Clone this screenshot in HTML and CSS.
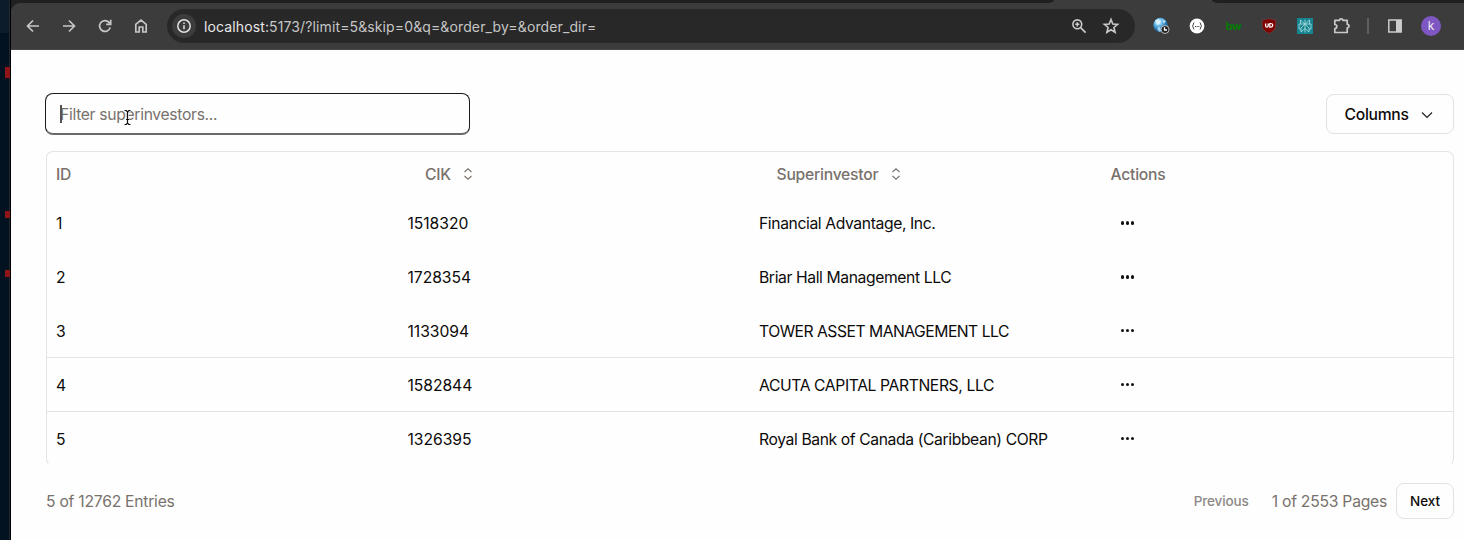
FILE: index.html
```
<!DOCTYPE html>
<html lang="en">
<head>
<meta charset="utf-8">
<title>Superinvestors</title>
<link rel="stylesheet" href="styles.css">
</head>
<body>
<div class="desktop">
  <div class="edge"><i class="mark m1"></i><i class="mark m2"></i><i class="mark m3"></i></div>
  <div class="window">
    <header class="chrome">
      <div class="tabs"><span class="tab-left"></span><span class="tab-gap"></span><span class="tab-right"></span></div>
      <div class="toolbar">
        <svg class="nav" viewBox="0 0 16 16"><path d="M14 8H3M8 2.500 2.500 8 8 13.500"/></svg>
        <svg class="nav" viewBox="0 0 16 16"><path d="M2 8h11M8 2.500 13.500 8 8 13.500"/></svg>
        <svg class="nav" viewBox="0 0 16 16"><path d="M13.200 9.400A5.400 5.400 0 1 1 12 4.400L13.500 6M13.700 1.800V6.400H9.200"/></svg>
        <svg class="nav" viewBox="0 0 16 16"><path d="M2.800 14V6.300L8 2.200l5.200 4.100V14H9.800V9H6.200v5z"/></svg>
        <div class="omnibox">
          <span class="info"><svg viewBox="0 0 16 16"><circle cx="8" cy="8" r="6.200"/><path d="M8 7.300v4M8 4.500v1.600"/></svg></span>
          <span class="url"><b>localhost:</b>5173/?limit=5&amp;skip=0&amp;q=&amp;order_by=&amp;order_dir=</span>
          <svg class="lens" viewBox="0 0 16 16"><circle cx="6.300" cy="6.300" r="4.400"/><path d="m9.600 9.600 5 5M6.300 4.200v4.200M4.200 6.300h4.200"/></svg>
          <svg class="star" viewBox="0 0 18 18"><path d="m9 2.500 1.800 4.500 4.800.4-3.700 3.100 1.200 4.800L9 12.700l-4.100 2.600 1.200-4.800L2.400 7.400l4.800-.4z"/></svg>
        </div>
        <div class="extensions">
          <svg viewBox="0 0 18 18"><defs><radialGradient id="globe" cx=".35" cy=".3"><stop offset="0" stop-color="#d9f1fc"/><stop offset=".5" stop-color="#72c1ea"/><stop offset="1" stop-color="#2377b8"/></radialGradient></defs><circle cx="8.500" cy="8" r="7.200" fill="url(#globe)"/><path d="M3 3.500 6 2l3 2-1 3-3 1zM10 2l4 2-2 3zM5 11l3-1 1 4-2 .8z" fill="#e4f6ff" opacity=".7"/><circle cx="13" cy="12.500" r="4" fill="#222" stroke="#ddd" stroke-width=".8"/><path d="M12.500 10.300V13H15" fill="none" stroke="#fff" stroke-width="1.300"/></svg>
          <svg viewBox="0 0 18 18"><circle cx="9" cy="9" r="7.400" fill="#fff"/><path d="M6.300 5.700C4.800 5.700 6 8.500 4.300 9c1.700.5.5 3.300 2 3.300M11.700 5.700c1.500 0 .3 2.800 2 3.300-1.700.5-.5 3.300-2 3.300" fill="none" stroke="#333" stroke-width="1"/><path d="M7 9.500h1M8.700 9.500h1M10.400 9.500h1" stroke="#333"/></svg>
          <span class="bw">bw</span>
          <svg viewBox="0 0 18 18"><path d="M9 1.200c2.300 1.300 4.300 1.600 6.800 1.600v5.500c0 4-3 6.500-6.800 8.200-3.800-1.700-6.800-4.200-6.800-8.200V2.800c2.500 0 4.500-.3 6.800-1.600z" fill="#800000" stroke="#634545" stroke-width=".8"/><path d="M5.600 6.500v2.200c0 2 2.600 2 2.600 0V6.500" fill="none" stroke="#fff" stroke-width="1.300"/><path d="M9.800 6.500v3.700h.7c3 0 3-3.700 0-3.700z" fill="none" stroke="#fff" stroke-width="1.200"/></svg>
          <svg viewBox="0 0 18 18"><path fill="#168391" d="M1 1h16v16H1z"/><path d="M9 2.500v13M9 7 4.500 3v4M9 7l4.500-4v4M5.200 7H3v5h2M12.800 7H15v5h-2M9 7l-4 4v4l4-3.500M9 7l4 4v4l-4-3.500M4.500 7h9" fill="none" stroke="#9fd9da" stroke-width=".9"/></svg>
          <svg viewBox="0 0 18 18"><path d="M2.800 3.300h4.700a1.700 1.500 0 0 1 3.400 0h4.300v4a1.800 1.800 0 0 1 0 3.600v4.600H2.800v-4a2 2 0 0 0 0-4z" fill="none" stroke="#c9c9c9" stroke-width="1.700" stroke-linejoin="round"/></svg>
        </div>
        <i class="divider"></i>
        <svg class="panel" viewBox="0 0 16 16"><path d="M1.800 2h12.400v12H1.800z" fill="none" stroke="#cbcbcb" stroke-width="1.500"/><path d="M9 2h5.200v12H9z" fill="#cbcbcb"/></svg>
        <span class="avatar">k</span>
      </div>
    </header>
    <main class="page">
      <div class="controls">
        <div class="filter"><i class="caret"></i><span class="placeholder">Filter superinvestors...</span>
          <svg class="cursor" viewBox="0 0 9 17"><path d="M1.500 1.500h1.700L4.500 3l1.300-1.500h1.700M4.500 3v11M1.500 15.500h1.700L4.500 14l1.300 1.500h1.700M3 10h3" fill="none" stroke="#fff" stroke-width="2.400"/><path d="M1.500 1.500h1.700L4.500 3l1.300-1.500h1.700M4.500 3v11M1.500 15.500h1.700L4.500 14l1.300 1.500h1.700M3 10.500h3" fill="none" stroke="#111" stroke-width="1.200"/></svg>
        </div>
        <div class="button columns">Columns<svg viewBox="0 0 12 8"><path d="m1 1.500 5 5 5-5"/></svg></div>
      </div>
      <div class="table">
        <div class="row head"><span>ID</span><span class="sortable">CIK<svg viewBox="0 0 10 12"><path d="M1.500 4 5 .8 8.500 4M1.500 8 5 11.200 8.500 8"/></svg></span><span class="sortable">Superinvestor<svg viewBox="0 0 10 12"><path d="M1.500 4 5 .8 8.500 4M1.500 8 5 11.200 8.500 8"/></svg></span><span>Actions</span></div>
        <div class="row"><span>1</span><span>1518320</span><span class="name">Financial Advantage, Inc.</span><span class="dots"><i></i><i></i><i></i></span></div>
        <div class="row"><span>2</span><span>1728354</span><span class="name">Briar Hall Management LLC</span><span class="dots"><i></i><i></i><i></i></span></div>
        <div class="row lined"><span>3</span><span>1133094</span><span class="name caps">TOWER ASSET MANAGEMENT LLC</span><span class="dots"><i></i><i></i><i></i></span></div>
        <div class="row lined"><span>4</span><span>1582844</span><span class="name">ACUTA CAPITAL PARTNERS, LLC</span><span class="dots"><i></i><i></i><i></i></span></div>
        <div class="row last"><span>5</span><span>1326395</span><span class="name">Royal Bank of Canada (Caribbean) CORP</span><span class="dots"><i></i><i></i><i></i></span></div>
      </div>
      <div class="footer">
        <span class="entries">5 of 12762 Entries</span>
        <span class="previous">Previous</span>
        <span class="pages">1 of 2553 Pages</span>
        <div class="button next">Next</div>
      </div>
    </main>
  </div>
</div>
</body>
</html>
```
FILE: styles.css
```
* { box-sizing: border-box; }
body { margin: 0; font-family: Inter, "Liberation Sans", sans-serif; font-size: 15.7px; color: #0c0a09; }
svg { display: block; flex: none; }
.desktop { display: flex; width: 1464px; height: 540px; overflow: hidden; background: #000; }
.edge { position: relative; width: 11px; flex: none; background: linear-gradient(#0d1c2b 0 33px, #021220 33px); border-right: 1px solid #000; box-shadow: inset -1px 0 #20282e; }
.mark { position: absolute; left: 5px; width: 5px; background: #8e1416; }
.m1 { top: 67px; height: 11px; }
.m2 { top: 211px; height: 7px; }
.m3 { top: 270px; height: 7px; }
.window { flex: 1; display: flex; flex-direction: column; background: #fefefe; }
.chrome { height: 50px; background: #1f2120; display: flex; flex-direction: column; }
.tabs { height: 3px; display: flex; background: #3c3c3c; }
.tab-left { width: 1043px; background: #1f2120; border-bottom-right-radius: 6px 3px; }
.tab-gap { width: 158px; }
.tab-right { flex: 1; background: #1f2120; border-bottom-left-radius: 6px 3px; }
.toolbar { height: 47px; background: #3c3c3c; border-top-left-radius: 9px; border-bottom: 1px solid #484647; display: flex; align-items: center; padding-left: 14px; }
.nav { width: 16px; height: 16px; margin-right: 20px; fill: none; stroke: #c6c6c6; stroke-width: 1.7; }
.omnibox { width: 968px; height: 34px; border-radius: 17px; background: #282828; margin-left: -2px; display: flex; align-items: center; padding-left: 5px; flex: none; }
.info { width: 24px; height: 24px; border-radius: 50%; background: #3c3c3c; display: flex; align-items: center; justify-content: center; }
.info svg { width: 16px; height: 16px; fill: none; stroke: #e2e2e2; stroke-width: 1.5; }
.url { margin-left: 8px; width: 867px; font-size: 14px; letter-spacing: .12px; color: #c6c6c6; white-space: nowrap; }
.url b { font-weight: 400; color: #e8e8e8; }
.lens { width: 16px; height: 16px; fill: none; stroke: #c9c9c9; stroke-width: 1.6; }
.star { width: 18px; height: 18px; margin-left: 15px; fill: none; stroke: #c9c9c9; stroke-width: 1.6; }
.extensions { display: flex; align-items: center; gap: 18px; margin-left: 17px; }
.extensions svg { width: 18px; height: 18px; }
.bw { width: 18px; font: 700 10.5px/18px "DejaVu Sans", sans-serif; letter-spacing: -1px; color: #087808; text-align: center; }
.divider { width: 2px; height: 16px; background: #606060; margin-left: 17px; }
.panel { width: 16px; height: 16px; margin-left: 18px; }
.avatar { width: 20px; height: 20px; border-radius: 50%; background: #7e57c2; color: #eee; font-size: 12px; line-height: 20px; text-align: center; margin-left: 18px; }
.page { flex: 1; padding: 43px 10px 0 34px; }
.controls { display: flex; justify-content: space-between; align-items: center; height: 42px; }
.filter { position: relative; width: 425px; height: 42px; border: 1px solid #1c1917; border-bottom: 2px solid #6b6866; border-radius: 8px; display: flex; align-items: center; color: #78716c; padding: 2px 0 0 14px; letter-spacing: -.32px; }
.caret { position: absolute; left: 14px; top: 11px; width: 1.5px; height: 18px; background: #57534e; }
.cursor { position: absolute; left: 77px; top: 15px; width: 9px; height: 17px; }
.button { border: 1px solid #e4e2e1; border-radius: 8px; display: flex; align-items: center; font-weight: 500; }
.columns { width: 128px; height: 40px; padding: 1px 0 0 17.500px; letter-spacing: -.3px; }
.columns svg { width: 12px; height: 8px; margin-left: 12px; fill: none; stroke: #222; stroke-width: 1.2; }
.table { margin: 16px 0 0 1px; height: 315px; border: 1px solid #e4e4e4; border-bottom-color: transparent; border-radius: 7px; }
.row { height: 54px; display: grid; grid-template-columns: repeat(4, 351.5px); align-items: center; }
.row > span { padding: 1px 0 0 9px; white-space: nowrap; letter-spacing: -.06px; }
.row .name { letter-spacing: -.39px; }
.row .caps { letter-spacing: -.5px; }
.head { height: 44px; color: #78716c; font-weight: 500; }
.head > span { letter-spacing: -.25px; }
.lined { border-bottom: 1px solid #e4e4e4; }
.last { height: 53px; }
.row .sortable { padding-left: 26.5px; display: flex; align-items: center; }
.sortable svg { width: 10px; height: 12px; margin: -1px 0 0 12.5px; fill: none; stroke: #78716c; stroke-width: 1.1; }
.row .dots { padding: 0 0 0 19.5px; display: flex; gap: 1.8px; }
.dots i { width: 3.2px; height: 3.2px; border-radius: 50%; background: #111; }
.footer { margin: 17px 0 0 1px; height: 36px; display: flex; align-items: center; color: #78716c; letter-spacing: -.25px; }
.entries { flex: 1; padding-top: 1px; }
.previous { font-size: 13.5px; font-weight: 500; letter-spacing: -.12px; color: #8c8885; margin-right: 23px; }
.pages { margin-right: 9px; padding-top: 1px; }
.next { width: 58px; height: 36px; justify-content: center; color: #0c0a09; font-size: 13.5px; letter-spacing: -.1px; }
```
